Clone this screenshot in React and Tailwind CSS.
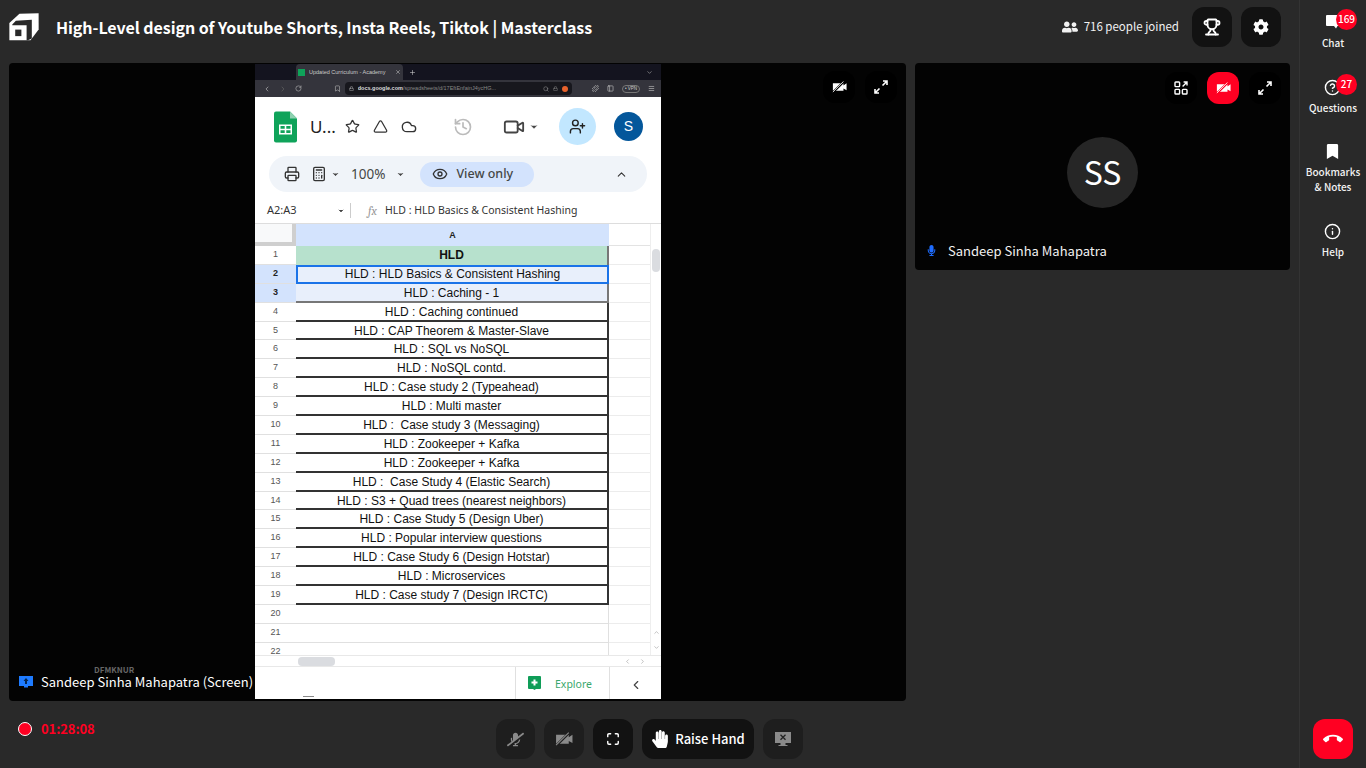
import React from "react";
import {
  Star, History, Video, UserPlus, Printer, Calculator, Eye, ChevronUp, ChevronDown, ChevronLeft, ChevronRight,
  Cloud, Triangle, Lock, Search, X, Plus, RotateCw, Puzzle, Bookmark as BookmarkLine, Maximize, Trophy, Info, CircleHelp,
  PanelLeft, Menu,
} from "lucide-react";
import { FaUserFriends, FaCog, FaBookmark, FaMicrophone, FaMicrophoneSlash, FaHandPaper } from "react-icons/fa";
import { MdCallEnd } from "react-icons/md";

const ROWS = [
  "HLD",
  "HLD : HLD Basics & Consistent Hashing",
  "HLD : Caching - 1",
  "HLD : Caching continued",
  "HLD : CAP Theorem & Master-Slave",
  "HLD : SQL vs NoSQL",
  "HLD : NoSQL contd.",
  "HLD : Case study 2 (Typeahead)",
  "HLD : Multi master",
  "HLD :  Case study 3 (Messaging)",
  "HLD : Zookeeper + Kafka",
  "HLD : Zookeeper + Kafka",
  "HLD :  Case Study 4 (Elastic Search)",
  "HLD : S3 + Quad trees (nearest neighbors)",
  "HLD : Case Study 5 (Design Uber)",
  "HLD : Popular interview questions",
  "HLD : Case Study 6 (Design Hotstar)",
  "HLD : Microservices",
  "HLD : Case study 7 (Design IRCTC)",
  "",
  "",
  "",
];

/* Expand arrows used on both video tiles */
const ExpandIcon = () => (
  <svg width="14" height="14" viewBox="0 0 14 14" fill="none" stroke="white" strokeWidth="1.6">
    <path d="M8.5 5.5 13 1M9 1h4v4M5.5 8.5 1 13M1 9v4h4" />
  </svg>
);

const LayoutIcon = () => (
  <svg width="14" height="14" viewBox="0 0 14 14" fill="none" stroke="white" strokeWidth="1.4">
    <rect x="1" y="1" width="4.6" height="4.6" rx="0.8" />
    <rect x="1" y="8.4" width="4.6" height="4.6" rx="0.8" />
    <rect x="8.4" y="8.4" width="4.6" height="4.6" rx="0.8" />
    <path d="M8.6 5.4 13 1M9.6 1H13v3.4" />
  </svg>
);

/* Camera with a "/" slash, the gap colour follows the button behind it */
const VideoOff = ({ color = "white", gap = "#000", width = 15 }) => (
  <svg width={width} height={(width * 13) / 17} viewBox="0 0 17 13">
    <path d="M1 2.500h12v8.500H1zM13 5l3.500-2.500v8L13 8.500z" fill={color} />
    <path d="M1.500 12.500 13.500 0.500" stroke={gap} strokeWidth="2.400" />
    <path d="M1 12.500 13 0.500" stroke={color} strokeWidth="1" />
  </svg>
);

const ScreenOffIcon = () => (
  <svg width="18" height="16" viewBox="0 0 18 16" fill="#8a8a8a">
    <path d="M1 1h16v11H1z" />
    <path d="M6.500 12h5v2h2v1h-9v-1h2z" />
    <path d="m6.500 3.800 5 5M11.500 3.800l-5 5" stroke="#222" strokeWidth="1.300" />
  </svg>
);

const Logo = () => (
  <svg width="30" height="28" viewBox="14 14 92 86">
    <path d="M15 45 46 16l59-1v50L80 98H15z" fill="white" />
    <path d="M24 49 35 38l49-3v57l-12 6h-4V52H24z" fill="#292929" />
    <path d="M33 65h19v20H33z" fill="#292929" />
  </svg>
);

const SheetsIcon = () => (
  <svg width="23" height="32" viewBox="0 0 23 31">
    <path d="M2 0h14l7 7v22a2 2 0 0 1-2 2H2a2 2 0 0 1-2-2V2a2 2 0 0 1 2-2z" fill="#0fa35a" />
    <path d="M16 0l7 7h-7z" fill="#8ed1b0" />
    <path d="M5 13h13v10H5zM6.500 14.500v2.800h4.200v-2.800zM12.300 14.500v2.800h4.200v-2.800zM6.500 18.800v2.800h4.200v-2.800zM12.300 18.800v2.800h4.200v-2.800z" fill="white" fillRule="evenodd" />
  </svg>
);

const ChatIcon = () => (
  <svg width="15" height="14" viewBox="0 0 15 14" fill="white">
    <path d="M1 0h13a1 1 0 0 1 1 1v9a1 1 0 0 1-1 1h-2.500l-1.500 2.500L8 11H1a1 1 0 0 1-1-1V1a1 1 0 0 1 1-1z" />
  </svg>
);

const ExploreIcon = () => (
  <svg width="13" height="14" viewBox="0 0 13 14">
    <path d="M1 0h11a1 1 0 0 1 1 1v11a1 1 0 0 1-1 1H8l-1.500 1L5 13H1a1 1 0 0 1-1-1V1a1 1 0 0 1 1-1z" fill="#0f9d58" />
    <path d="M5.500 3.500h2v2h2v2h-2v2h-2v-2h-2v-2h2z" fill="white" />
  </svg>
);

const ScreenShareIcon = () => (
  <svg width="14" height="13" viewBox="0 0 14 13" fill="#1e7bff">
    <path d="M0 0h14v10H9v1.500H5V10H0z" />
    <path d="M7 2 4.500 5H6v3h2V5h1.500z" fill="#06264f" />
  </svg>
);

const RoundBtn = ({ className = "w-10", children }) => (
  <button className={`h-10 rounded-xl flex items-center justify-center ${className}`}>{children}</button>
);

const SideItem = ({ icon, badge, children, className = "" }) => (
  <div className={`flex flex-col items-center text-[10px] leading-[15px] font-medium text-[#f2f2f2] text-center ${className}`}>
    <div className="relative h-5 w-5 flex items-center justify-center mb-[3px]">
      {icon}
      {badge && (
        <span className="absolute left-1/2 ml-[3px] -top-[3px] w-[21px] h-[21px] rounded-full bg-[#ff0022] text-white text-[10px] leading-[20px] text-center">
          {badge}
        </span>
      )}
    </div>
    {children}
  </div>
);

const SheetShare = () => (
  <div className="w-[406px] h-[635px] bg-white flex flex-col overflow-hidden mt-px" style={{ fontFamily: '"Liberation Sans", sans-serif' }}>
    {/* Browser tab strip */}
    <div className="h-4 bg-[#14141f] flex items-center pl-[41px] pr-2 shrink-0">
      <div className="w-[107px] h-4 bg-[#34343c] flex items-center gap-1 px-0.5 text-[5.5px] text-[#c9c9c9] rounded-t-sm">
        <span className="w-[7px] h-[7px] bg-[#0fa35a] shrink-0" />
        <span className="flex-1 truncate">Updated Curriculum - Academy</span>
        <X size={6} color="#ccc" />
      </div>
      <Plus size={7} color="#ccc" className="ml-1.5" />
      <ChevronDown size={7} color="#aaa" className="ml-auto" />
    </div>
    {/* Address bar */}
    <div className="h-[17px] bg-[#34343c] flex items-center pl-2 pr-[6px] gap-2 shrink-0">
      <ChevronLeft size={8} color="#bbb" />
      <ChevronRight size={8} color="#666" />
      <RotateCw size={7} color="#bbb" />
      <BookmarkLine size={7} color="#bbb" className="ml-[24px]" />
      <div className="w-[230px] h-[13px] bg-[#17171d] rounded-sm flex items-center gap-1 px-1 text-[5.5px] text-[#888] -ml-1">
        <Lock size={5} color="#ccc" />
        <span className="flex-1 truncate"><span className="text-[#ddd] font-bold">docs.google.com</span>/spreadsheets/d/17EftEnfainJ4ycHG...</span>
        <Search size={6} color="#999" />
        <Lock size={5} color="#999" />
        <span className="w-1.5 h-1.5 bg-[#e8622c] rounded-sm" />
      </div>
      <Puzzle size={7} color="#ccc" className="ml-[12px]" />
      <PanelLeft size={7} color="#ccc" />
      <span className="border border-[#777] rounded text-[4.5px] leading-[6px] text-[#ccc] px-0.5 whitespace-nowrap shrink-0">• VPN</span>
      <Menu size={7} color="#ccc" />
    </div>
    {/* Sheets header */}
    <div className="h-[59px] flex items-center pl-[19px] pr-[18px] shrink-0 text-[#444746]">
      <SheetsIcon />
      <span className="ml-[13px] text-[17px] text-[#222]" style={{ fontFamily: '"Noto Sans", sans-serif' }}>U...</span>
      <Star size={15} className="ml-[9px]" color="#333" />
      <Triangle size={15} className="ml-[13px]" color="#333" />
      <Cloud size={16} className="ml-[13px]" color="#333" />
      <History size={20} className="ml-[36px]" color="#bbb" />
      <Video size={22} className="ml-[30px]" color="#444" />
      <ChevronDown size={10} className="ml-1" color="#444" fill="#444" />
      <span className="ml-[20px] w-[37px] h-[37px] rounded-full bg-[#c2e7ff] flex items-center justify-center"><UserPlus size={17} color="#222" /></span>
      <span className="ml-auto w-[29px] h-[29px] rounded-full bg-[#04579b] flex items-center justify-center text-white text-[14px]">S</span>
    </div>
    {/* Toolbar */}
    <div className="h-[45px] shrink-0 px-[14px] pb-[9px]">
      <div className="h-[36px] rounded-full bg-[#f0f4f9] flex items-center pl-[15px] pr-[19px] text-[#444746]" style={{ fontFamily: '"Noto Sans", sans-serif' }}>
        <Printer size={16} color="#333" />
        <Calculator size={16} color="#333" className="ml-[11px]" />
        <ChevronDown size={9} className="ml-1" color="#444" fill="#444" />
        <span className="ml-[11px] text-[13.5px]">100%</span>
        <ChevronDown size={9} className="ml-[11px]" color="#444" fill="#444" />
        <span className="ml-[15px] h-[25px] w-[114px] rounded-full bg-[#d3e3fd] flex items-center gap-2 pl-3 text-[12.5px] font-medium">
          <Eye size={16} color="#333" /> View only
        </span>
        <ChevronUp size={13} className="ml-auto" color="#333" />
      </div>
    </div>
    {/* Formula bar */}
    <div className="h-[23px] shrink-0 flex items-center pl-[12px] pb-[3px] text-[11px] text-[#333] border-b border-[#ddd]" style={{ fontFamily: '"Noto Sans", sans-serif' }}>
      <span className="w-[70px]">A2:A3</span>
      <ChevronDown size={8} color="#444" fill="#444" />
      <span className="ml-[5px] h-[15px] border-l border-[#ccc]" />
      <span className="ml-[17px] italic text-[12px] text-[#999] font-serif w-[11px]">fx</span>
      <span className="ml-[6px] text-[10.5px]">HLD : HLD Basics &amp; Consistent Hashing</span>
    </div>
    {/* Grid */}
    <div className="flex-1 min-h-0 flex">
      <div className="flex-1 min-w-0 flex flex-col">
        <div className="h-[22px] flex shrink-0">
          <div className="w-[41px] bg-[#f8f9fa] border-r-4 border-b-4 border-[#cfcfcf]" />
          <div className="w-[313px] bg-[#d3e3fd] text-center text-[9px] leading-[22px] font-bold text-[#222]">A</div>
          <div className="flex-1 border-b border-[#e3e3e3]" />
        </div>
        <div className="h-[410px] overflow-hidden">
          {ROWS.map((text, i) => (
            <div key={i} className="h-[18.9px] flex">
              <div className={`w-[41px] border-b border-[#e0e0e0] text-center text-[9px] leading-[17px] ${i === 1 || i === 2 ? "bg-[#d3e3fd] font-bold text-[#222]" : "text-[#555]"}`}>
                {i + 1}
              </div>
              <div
                className={`w-[313px] text-center whitespace-pre text-[12px] text-[#111] ${
                  i === 0 ? "leading-[18px] bg-[#b7e1cd] font-bold border-r-2 border-[#777]"
                  : i === 1 ? "leading-[15px] bg-[#e8effb] border-2 border-[#1a73e8]"
                  : i === 2 ? "leading-[18px] bg-[#e8effb] border-b-2 border-r-2 border-[#777]"
                  : i < 19 ? "leading-[19px] border-b-2 border-r-2 border-[#333]"
                  : "leading-[18px] border-b border-r border-[#e0e0e0]"
                }`}
              >
                {text}
              </div>
              <div className="flex-1 border-b border-[#ececec]" />
            </div>
          ))}
        </div>
      </div>
      {/* Vertical scrollbar */}
      <div className="w-[11px] bg-white border-l border-[#eee] pt-[25px] flex flex-col items-center">
        <span className="w-[8px] h-[23px] rounded bg-[#dadce0]" />
        <ChevronUp size={7} color="#999" className="mt-auto mb-[8px]" />
        <ChevronDown size={7} color="#999" className="mb-[4px]" />
      </div>
    </div>
    {/* Horizontal scrollbar */}
    <div className="h-[12px] shrink-0 flex items-center pl-[43px] pr-[15px] border-y border-[#e8e8e8] bg-white">
      <span className="w-[37px] h-[9px] rounded bg-[#dadce0]" />
      <ChevronLeft size={7} color="#999" className="ml-auto" />
      <ChevronRight size={7} color="#999" className="ml-[8px]" />
    </div>
    {/* Bottom bar */}
    <div className="h-[32px] shrink-0 flex bg-white">
      <div className="flex-1 flex items-end pl-[48px] pb-[2px]">
        <span className="w-[11px] h-px bg-[#888]" />
      </div>
      <div className="w-[95px] border-x border-[#e0e0e0] flex items-center gap-[14px] pl-[12px] text-[10.5px] text-[#3aa76d]" style={{ fontFamily: '"Noto Sans", sans-serif' }}>
        <ExploreIcon />
        <span className="mt-[3px]">Explore</span>
      </div>
      <div className="w-[51px] flex items-center justify-center pt-[3px]"><ChevronLeft size={14} color="#444" /></div>
    </div>
  </div>
);

export default function App() {
  return (
    <div className="w-full h-[768px] bg-[#292929] flex overflow-hidden" style={{ fontFamily: '"Noto Sans CJK SC", "Noto Sans", sans-serif' }}>
      <div className="w-[1299px] flex flex-col shrink-0">
        {/* Header */}
        <header className="h-[54px] mb-[9px] flex items-center pl-[9px] pr-[18px] shrink-0">
          <Logo />
          <h1 className="ml-[17px] text-[16px] leading-5 font-bold text-white tracking-[-0.06px]">
            High-Level design of Youtube Shorts, Insta Reels, Tiktok | Masterclass
          </h1>
          <div className="ml-auto flex items-center gap-1.5 text-[#f2f2f2] text-[11.5px]">
            <FaUserFriends size={16} />
            716 people joined
          </div>
          <RoundBtn className="w-10 ml-[13px] bg-[#121212]"><Trophy size={18} color="white" strokeWidth={2.4} /></RoundBtn>
          <RoundBtn className="w-10 ml-[9px] bg-[#121212]"><FaCog size={16} color="white" /></RoundBtn>
        </header>

        {/* Video tiles */}
        <div className="h-[638px] flex gap-[9px] pl-[9px] shrink-0 items-start">
          <div className="relative w-[897px] h-full bg-[#030303] rounded flex justify-center pl-px">
            <SheetShare />
            <div className="absolute left-[10px] bottom-[11px] flex items-center gap-2 text-white text-[13px] leading-4">
              <ScreenShareIcon />
              Sandeep Sinha Mahapatra (Screen)
            </div>
            <span className="absolute left-[85px] bottom-[27px] text-[8px] leading-[9px] text-[#666] font-bold">DFMKNUR</span>
            <div className="absolute top-[8px] right-[9px] flex gap-[10px]">
              <span className="w-8 h-8 rounded-xl bg-black flex items-center justify-center"><VideoOff /></span>
              <span className="w-8 h-8 rounded-xl bg-black flex items-center justify-center"><ExpandIcon /></span>
            </div>
          </div>
          <div className="relative w-[375px] h-[207px] bg-[#030303] rounded flex justify-start">
            <div className="w-[71px] h-[71px] ml-[152px] mt-[74px] rounded-full bg-[#262626] flex items-center justify-center pb-[3px] text-white text-[32px]">SS</div>
            <div className="absolute left-[11px] bottom-[10px] flex items-center gap-[11px] text-[#f2f2f2] text-[13px]">
              <FaMicrophone size={11} color="#1e6cff" />
              Sandeep Sinha Mahapatra
            </div>
            <div className="absolute top-[9px] right-[9px] flex gap-[10px]">
              <span className="w-8 h-8 rounded-xl bg-black flex items-center justify-center"><LayoutIcon /></span>
              <span className="w-8 h-8 rounded-xl bg-[#ff0022] flex items-center justify-center"><VideoOff gap="#ff0022" /></span>
              <span className="w-8 h-8 rounded-xl bg-black flex items-center justify-center"><ExpandIcon /></span>
            </div>
          </div>
        </div>

        {/* Bottom controls */}
        <div className="relative flex-1 flex items-center justify-center gap-[9px] pt-[9px]">
          <div className="absolute left-[18px] top-[18px] flex items-center gap-[9px]">
            <span className="w-[14px] h-[14px] rounded-full bg-[#ff0022] border border-white" />
            <span className="text-[13px] font-bold text-[#ff0022] tracking-[-0.1px]">01:28:08</span>
          </div>
          <RoundBtn className="w-[39px] bg-[#1e1e1e]"><FaMicrophoneSlash size={17} color="#8a8a8a" className="-scale-x-100" /></RoundBtn>
          <RoundBtn className="w-10 bg-[#1e1e1e]"><VideoOff color="#8a8a8a" gap="#1e1e1e" width={18} /></RoundBtn>
          <RoundBtn className="w-10 bg-[#121212]"><Maximize size={14} color="white" strokeWidth={2.4} /></RoundBtn>
          <button className="h-10 w-[112px] rounded-xl bg-[#121212] flex items-center justify-center gap-[6px] text-white text-[13px] font-medium">
            <FaHandPaper size={18} color="white" />
            Raise Hand
          </button>
          <RoundBtn className="w-10 bg-[#1e1e1e]"><ScreenOffIcon /></RoundBtn>
        </div>
      </div>

      {/* Right rail */}
      <aside className="flex-1 border-l border-[#333] flex flex-col items-center pt-[12px]">
        <SideItem icon={<ChatIcon />} badge="169">Chat</SideItem>
        <SideItem className="mt-[27px]" icon={<CircleHelp size={17} color="white" />} badge="27">Questions</SideItem>
        <SideItem className="mt-[26px]" icon={<FaBookmark size={15} color="white" />}>Bookmarks<br />&amp; Notes</SideItem>
        <SideItem className="mt-[27px]" icon={<Info size={17} color="white" />}>Help</SideItem>
        <button className="mt-auto mb-[9px] w-10 h-10 rounded-xl bg-[#ff0022] flex items-center justify-center">
          <MdCallEnd size={20} color="white" />
        </button>
      </aside>
    </div>
  );
}
